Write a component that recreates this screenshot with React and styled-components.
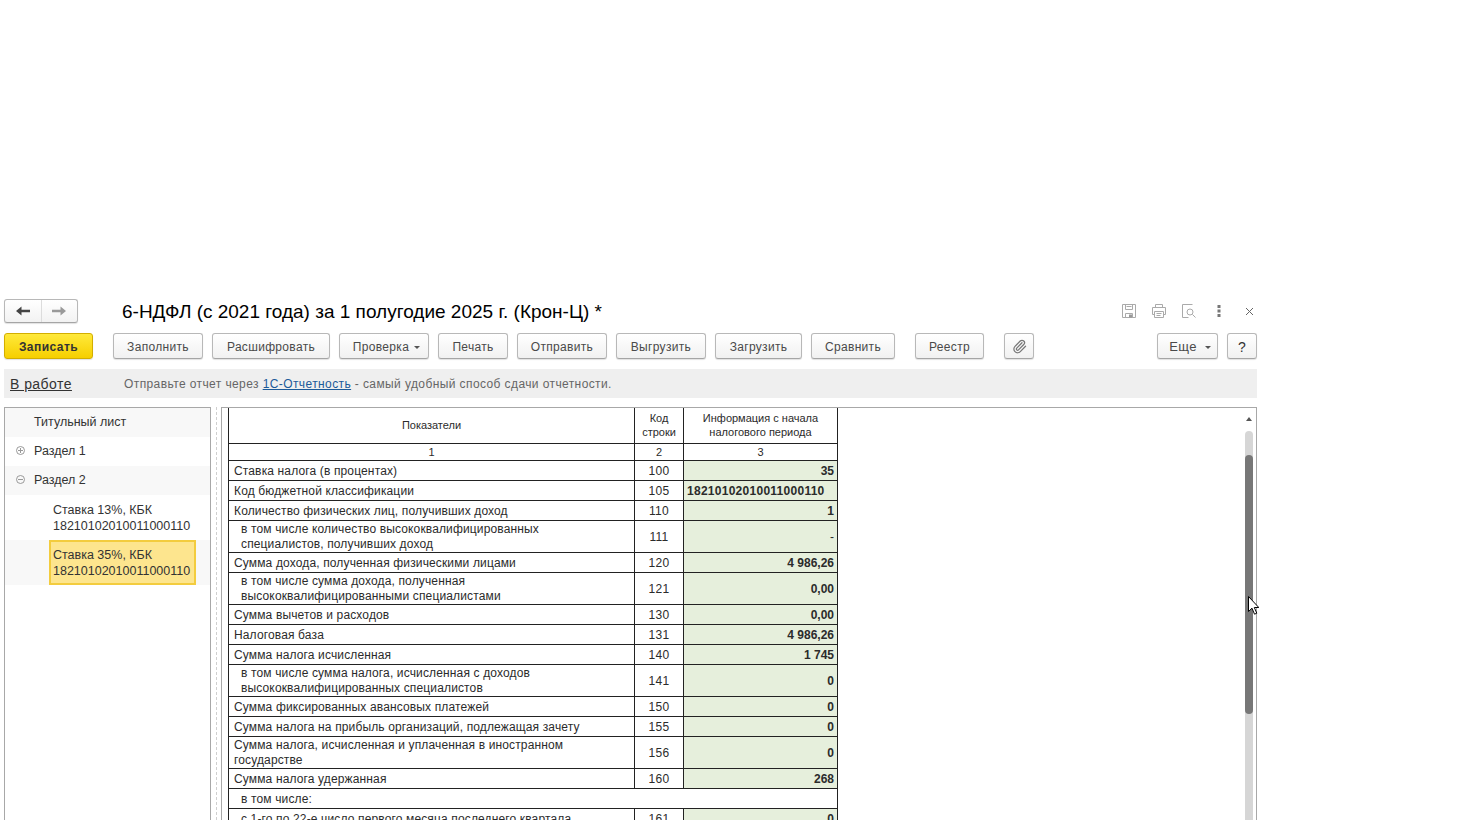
import React from 'react';
import styled, { createGlobalStyle } from 'styled-components';
import { Paperclip } from 'lucide-react';

const GlobalStyle = createGlobalStyle`
  html, body {
    margin: 0;
    height: 820px;
    overflow: hidden;
    background: #fff;
  }
  * { box-sizing: border-box; }
`;

const Page = styled.div`
  position: relative;
  width: 1253px;
  height: 830px;
  margin-left: 4px;
  padding-top: 299px;
  font-family: 'Liberation Sans', Arial, sans-serif;
  font-size: 12px;
  color: #333;
  display: flex;
  flex-direction: column;
`;

const TitleRow = styled.div`
  display: flex;
  align-items: center;
  height: 24px;
`;

const NavGroup = styled.div`
  display: flex;
  width: 74px;
  height: 24px;
  border: 1px solid #b8b8b8;
  border-bottom-color: #a5a5a5;
  border-radius: 3px;
  background: linear-gradient(#fff, #f2f2f2);
  box-shadow: 0 1px 1px rgba(0, 0, 0, 0.12);
`;

const NavCell = styled.div`
  flex: 1;
  display: flex;
  align-items: center;
  justify-content: center;
  & + & { border-left: 1px solid #dcdcdc; }
`;

const Title = styled.h1`
  margin: 0 0 0 44px;
  padding-top: 1px;
  font-size: 19px;
  font-weight: 400;
  color: #000;
  white-space: nowrap;
  flex: 1;
`;

const WindowIcons = styled.div`
  display: flex;
  align-items: center;
  margin-right: -7px;
`;

const WindowIcon = styled.span`
  width: 30px;
  display: flex;
  justify-content: center;
`;

const CommandBar = styled.div`
  display: flex;
  align-items: stretch;
  height: 26px;
  margin-top: 10px;
`;

const Btn = styled.div`
  display: flex;
  align-items: center;
  justify-content: center;
  gap: ${(p) => p.$gap ?? 5}px;
  width: ${(p) => p.$w}px;
  margin-left: ${(p) => p.$ml ?? 9}px;
  padding-top: 1px;
  border: 1px solid #b8b8b8;
  border-bottom-color: #a5a5a5;
  border-radius: 3px;
  background: linear-gradient(#fff, #f1f1f1);
  box-shadow: 0 1px 1px rgba(0, 0, 0, 0.12);
  color: #4a4a4a;
  letter-spacing: 0.32px;
  white-space: nowrap;
`;

const PrimaryBtn = styled(Btn)`
  border-color: #d3ae00;
  background: linear-gradient(#ffe93b, #f6cf00);
  color: #333;
  font-weight: 700;
  letter-spacing: 0.45px;
`;

const DropBtn = styled(Btn)`
  padding-left: 5px;
  font-size: ${(p) => p.$fs ?? 12}px;
`;

const Caret = styled.span`
  width: 0;
  height: 0;
  margin-top: 1px;
  border-left: 3px solid transparent;
  border-right: 3px solid transparent;
  border-top: 3px solid #555;
`;

const HelpMark = styled.span`
  color: #333;
  font-size: 14px;
`;

const InfoBar = styled.div`
  display: flex;
  align-items: center;
  height: 29px;
  margin-top: 10px;
  padding-left: 6px;
  background: #efefef;
`;

const Status = styled.span`
  width: 114px;
  font-size: 14px;
  letter-spacing: 0.45px;
  color: #333;
  text-decoration: underline;
`;

const InfoText = styled.span`
  color: #666;
  letter-spacing: 0.4px;
`;

const InfoLink = styled.span`
  color: #1c5a99;
  text-decoration: underline;
`;

const Body = styled.div`
  flex: 1;
  display: flex;
  margin-top: 9px;
  min-height: 0;
`;

const SidePanel = styled.div`
  width: 207px;
  border: 1px solid #a8a8a8;
  border-bottom: 0;
`;

const TreeRow = styled.div`
  display: flex;
  align-items: center;
  height: ${(p) => p.$h ?? 29}px;
  padding-left: ${(p) => p.$pl ?? 11}px;
  padding-bottom: ${(p) => (p.$h ? 0 : 2)}px;
  background: ${(p) => (p.$alt ? '#f8f8f8' : '#fff')};
  font-size: 12.5px;
`;

const TreeToggle = styled.span`
  width: 18px;
  display: flex;
  align-items: center;
`;

const LeafLabel = styled.div`
  display: flex;
  flex-direction: column;
  justify-content: center;
  line-height: 16px;
  padding-left: 4px;
  ${(p) => p.$current && `
    width: 147px;
    height: 45px;
    padding-left: 2px;
    background: #fde58e;
    border: 2px solid #f3cc3e;
  `}
`;

const Splitter = styled.div`
  width: 10px;
  display: flex;
  justify-content: center;
  &::before {
    content: '';
    border-left: 1px dashed #cfcfcf;
  }
`;

const ReportPanel = styled.div`
  flex: 1;
  display: flex;
  border: 1px solid #a8a8a8;
  border-bottom: 0;
  padding-left: 6px;
  min-width: 0;
`;

const ReportArea = styled.div`
  flex: 1;
  overflow: hidden;
`;

const Table = styled.table`
  width: 610px;
  table-layout: fixed;
  border-collapse: separate;
  border-spacing: 0;
  color: #2b2b2b;
  font-size: 12px;
  line-height: 15px;
`;

const Cell = styled.td`
  height: ${(p) => p.$h ?? 20}px;
  padding: ${(p) => (p.$h ? '1px' : '2px')} 0 0;
  border-right: 1px solid #222;
  border-bottom: 1px solid #222;
  &:first-child { border-left: 1px solid #222; }
`;

const HeadCell = styled(Cell)`
  padding: ${(p) => (p.$top ? '0 0 2px' : '0')};
  text-align: center;
  font-size: 11px;
  line-height: 14px;
`;

const NameCell = styled(Cell)`
  padding-top: ${(p) => (p.$h ? 1 : 2)}px;
  padding-bottom: 0;
  padding-left: ${(p) => (p.$sub ? 12 : 5)}px;
  padding-right: 4px;
  letter-spacing: 0.14px;
`;

const CodeCell = styled(Cell)`
  text-align: center;
  letter-spacing: 0.3px;
`;

const ValueCell = styled(Cell)`
  background: #e6efdc;
  font-weight: 700;
  text-align: ${(p) => (p.$left ? 'left' : 'right')};
  padding-left: ${(p) => (p.$left ? 3 : 0)}px;
  padding-right: ${(p) => (p.$left ? 0 : 3)}px;
  letter-spacing: ${(p) => (p.$left ? '0.27px' : '0')};
`;

const Dash = styled.span`
  font-weight: 400;
`;

const Scrollbar = styled.div`
  width: 8px;
  margin-right: 3px;
  display: flex;
  flex-direction: column;
  align-items: center;
  padding-top: 9px;
`;

const ScrollUp = styled.span`
  width: 0;
  height: 0;
  border-left: 3px solid transparent;
  border-right: 3px solid transparent;
  border-bottom: 4px solid #555;
`;

const ScrollTrack = styled.div`
  width: 8px;
  flex: 1;
  margin-top: 10px;
  padding-top: 24px;
  background: #d6d6d6;
  border-radius: 4px 4px 0 0;
`;

const ScrollThumb = styled.div`
  height: 259px;
  background: #777;
  border-radius: 4px;
`;

const Pointer = styled.svg`
  position: absolute;
  left: 1244px;
  top: 596px;
`;

const rows = [
  { name: 'Ставка налога (в процентах)', code: '100', value: '35' },
  { name: 'Код бюджетной классификации', code: '105', value: '18210102010011000110', left: true },
  { name: 'Количество физических лиц, получивших доход', code: '110', value: '1' },
  { name: <>в том числе количество высококвалифицированных<br />специалистов, получивших доход</>, code: '111', value: <Dash>-</Dash>, sub: true, h: 32 },
  { name: 'Сумма дохода, полученная физическими лицами', code: '120', value: '4 986,26' },
  { name: <>в том числе сумма дохода, полученная<br />высококвалифицированными специалистами</>, code: '121', value: '0,00', sub: true, h: 32 },
  { name: 'Сумма вычетов и расходов', code: '130', value: '0,00' },
  { name: 'Налоговая база', code: '131', value: '4 986,26' },
  { name: 'Сумма налога исчисленная', code: '140', value: '1 745' },
  { name: <>в том числе сумма налога, исчисленная с доходов<br />высококвалифицированных специалистов</>, code: '141', value: '0', sub: true, h: 32 },
  { name: 'Сумма фиксированных авансовых платежей', code: '150', value: '0' },
  { name: 'Сумма налога на прибыль организаций, подлежащая зачету', code: '155', value: '0' },
  { name: <>Сумма налога, исчисленная и уплаченная в иностранном<br />государстве</>, code: '156', value: '0', h: 32 },
  { name: 'Сумма налога удержанная', code: '160', value: '268' },
];

const Arrow = ({ dir, color }) => (
  <svg width="16" height="12" viewBox="0 0 16 12">
    <path
      d={dir === 'left' ? 'M1 6l5.5-4.5V4.7H15v2.6H6.5v3.2z' : 'M15 6L9.5 1.500V4.700H1v2.600h8.500v3.200z'}
      fill={color}
    />
  </svg>
);

const SaveIcon = () => (
  <svg width="16" height="16" viewBox="0 0 16 16" fill="none" stroke="#aaa">
    <path d="M1.500 1.500h13v13h-13z" />
    <path d="M4.500 1.500v5h7v-5M5.500 3.500h5" />
    <path d="M4.500 14.500v-4h7v4" />
    <path d="M8 11.500h3v3H8z" fill="#999" stroke="none" />
  </svg>
);

const PrintIcon = () => (
  <svg width="16" height="16" viewBox="0 0 16 16" fill="none" stroke="#aaa">
    <path d="M4.500 4.500v-3h7v3" />
    <path d="M3.500 11.500h-2v-7h13v7h-2" />
    <path d="M3.500 8.500h9v6h-9zM5.500 10.500h5M5.500 12.500h4" />
  </svg>
);

const PreviewIcon = () => (
  <svg width="16" height="16" viewBox="0 0 16 16" fill="none" stroke="#aaa">
    <path d="M11.500 1.500h-10v13h6" />
    <circle cx="9" cy="9" r="3" />
    <path d="M11.500 11.500l3 3" />
  </svg>
);

const DotsIcon = () => (
  <svg width="4" height="14" viewBox="0 0 4 14" fill="#777">
    <rect x="0.500" y="1" width="3" height="3" />
    <rect x="0.500" y="5.500" width="3" height="3" />
    <rect x="0.500" y="10" width="3" height="3" />
  </svg>
);

const CloseIcon = () => (
  <svg width="9" height="9" viewBox="0 0 9 9" stroke="#666" fill="none">
    <path d="M1 1l7 7M8 1L1 8" />
  </svg>
);

const ToggleIcon = ({ open }) => (
  <svg width="9" height="9" viewBox="0 0 9 9" fill="none" stroke="#999">
    <circle cx="4.500" cy="4.500" r="4" />
    <path d={open ? 'M2 4.500h5' : 'M2 4.500h5M4.500 2v5'} />
  </svg>
);

const App = () => (
  <Page>
    <GlobalStyle />
    <TitleRow>
      <NavGroup>
        <NavCell><Arrow dir="left" color="#444" /></NavCell>
        <NavCell><Arrow dir="right" color="#999" /></NavCell>
      </NavGroup>
      <Title>6-НДФЛ (с 2021 года) за 1 полугодие 2025 г. (Крон-Ц) *</Title>
      <WindowIcons>
        <WindowIcon><SaveIcon /></WindowIcon>
        <WindowIcon><PrintIcon /></WindowIcon>
        <WindowIcon><PreviewIcon /></WindowIcon>
        <WindowIcon><DotsIcon /></WindowIcon>
        <WindowIcon><CloseIcon /></WindowIcon>
      </WindowIcons>
    </TitleRow>

    <CommandBar>
      <PrimaryBtn $w={89} $ml={0}>Записать</PrimaryBtn>
      <Btn $w={90} $ml={20}>Заполнить</Btn>
      <Btn $w={118}>Расшифровать</Btn>
      <DropBtn $w={90}>Проверка<Caret /></DropBtn>
      <Btn $w={70}>Печать</Btn>
      <Btn $w={90}>Отправить</Btn>
      <Btn $w={90}>Выгрузить</Btn>
      <Btn $w={87}>Загрузить</Btn>
      <Btn $w={84}>Сравнить</Btn>
      <Btn $w={69} $ml={20}>Реестр</Btn>
      <Btn $w={30} $ml={20}>
        <Paperclip size={15} color="#777" strokeWidth={2} />
      </Btn>
      <DropBtn $w={61} $ml={123} $gap={8} $fs={13}>Еще<Caret /></DropBtn>
      <Btn $w={30}><HelpMark>?</HelpMark></Btn>
    </CommandBar>

    <InfoBar>
      <Status>В работе</Status>
      <InfoText>
        Отправьте отчет через <InfoLink>1С-Отчетность</InfoLink> - самый удобный способ сдачи отчетности.
      </InfoText>
    </InfoBar>

    <Body>
      <SidePanel>
        <TreeRow $alt $pl={29}>Титульный лист</TreeRow>
        <TreeRow>
          <TreeToggle><ToggleIcon /></TreeToggle>
          Раздел 1
        </TreeRow>
        <TreeRow $alt>
          <TreeToggle><ToggleIcon open /></TreeToggle>
          Раздел 2
        </TreeRow>
        <TreeRow $h={45} $pl={44}>
          <LeafLabel>Ставка 13%, КБК<span>18210102010011000110</span></LeafLabel>
        </TreeRow>
        <TreeRow $h={45} $pl={44} $alt>
          <LeafLabel $current>Ставка 35%, КБК<span>18210102010011000110</span></LeafLabel>
        </TreeRow>
      </SidePanel>

      <Splitter />

      <ReportPanel>
        <ReportArea>
          <Table>
            <colgroup>
              <col style={{ width: 407 }} />
              <col style={{ width: 49 }} />
              <col style={{ width: 154 }} />
            </colgroup>
            <tbody>
              <tr>
                <HeadCell $h={36} $top>Показатели</HeadCell>
                <HeadCell $h={36} $top>Код<br />строки</HeadCell>
                <HeadCell $h={36} $top>Информация с начала<br />налогового периода</HeadCell>
              </tr>
              <tr>
                <HeadCell $h={17}>1</HeadCell>
                <HeadCell $h={17}>2</HeadCell>
                <HeadCell $h={17}>3</HeadCell>
              </tr>
              {rows.map((row) => (
                <tr key={row.code}>
                  <NameCell $h={row.h} $sub={row.sub}>{row.name}</NameCell>
                  <CodeCell $h={row.h}>{row.code}</CodeCell>
                  <ValueCell $h={row.h} $left={row.left}>{row.value}</ValueCell>
                </tr>
              ))}
              <tr>
                <NameCell colSpan={3} $sub>в том числе:</NameCell>
              </tr>
              <tr>
                <NameCell $sub>с 1-го по 22-е число первого месяца последнего квартала</NameCell>
                <CodeCell>161</CodeCell>
                <ValueCell>0</ValueCell>
              </tr>
            </tbody>
          </Table>
        </ReportArea>
        <Scrollbar>
          <ScrollUp />
          <ScrollTrack>
            <ScrollThumb />
          </ScrollTrack>
        </Scrollbar>
      </ReportPanel>
    </Body>

    <Pointer width="11" height="19" viewBox="0 0 11 19">
      <path d="M0.500 0.500v15l3.500-3.300 2.500 6 2.300-1-2.500-5.700h4.500z" fill="#fff" stroke="#000" />
    </Pointer>
  </Page>
);

export default App;
